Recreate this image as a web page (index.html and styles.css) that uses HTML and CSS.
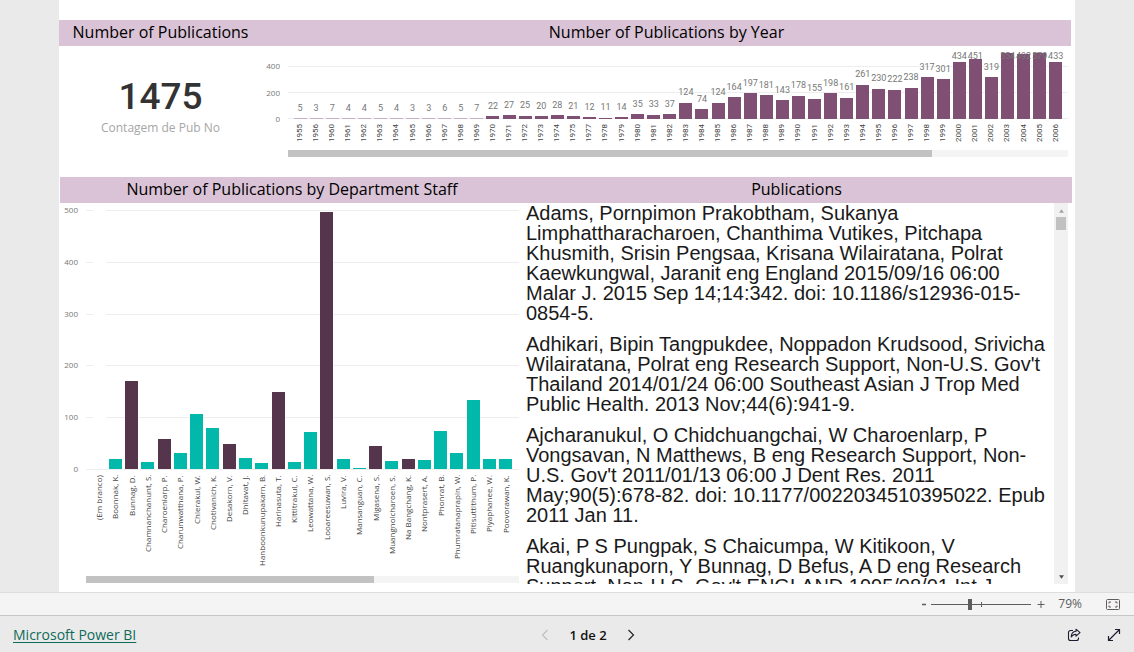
FILE: index.html
```html
<!DOCTYPE html>
<html lang="pt">
<head>
<meta charset="utf-8">
<title>Microsoft Power BI</title>
<link rel="stylesheet" href="styles.css">
</head>
<body>
<main class="report">
  <header class="band band-top">
    <h2 class="band-title band-card">Number of Publications</h2>
    <h2 class="band-title band-year">Number of Publications by Year</h2>
  </header>
  <section class="row-top">
    <div class="card">
      <div class="card-value">1475</div>
      <div class="card-label">Contagem de Pub No</div>
    </div>
    <div class="chart year-chart">
      <div class="axis year-axis"><span>400</span><span>200</span><span>0</span></div>
      <div class="chart-body">
        <div class="plot year-plot">
          <div class="grid"><i></i><i></i><i></i></div>
          <div class="columns" id="year-bars"></div>
        </div>
        <div class="labels year-labels" id="year-labels"></div>
        <div class="hscroll"><div class="hthumb year-thumb"></div></div>
      </div>
    </div>
  </section>
  <header class="band band-bottom">
    <h2 class="band-title band-staff">Number of Publications by Department Staff</h2>
    <h2 class="band-title band-pubs">Publications</h2>
  </header>
  <section class="row-bottom">
    <div class="chart staff-chart">
      <div class="axis staff-axis"><span>500</span><span>400</span><span>300</span><span>200</span><span>100</span><span>0</span></div>
      <div class="chart-body">
        <div class="plot staff-plot">
          <div class="grid"><i></i><i></i><i></i><i></i><i></i><i></i></div>
          <div class="columns" id="staff-bars"></div>
        </div>
        <div class="labels staff-labels" id="staff-labels"></div>
        <div class="hscroll"><div class="hthumb staff-thumb"></div></div>
      </div>
    </div>
    <div class="pubs">
      <div class="pubs-text">
        <p>Adams, Pornpimon Prakobtham, Sukanya Limphattharacharoen, Chanthima Vutikes, Pitchapa Khusmith, Srisin Pengsaa, Krisana Wilairatana, Polrat Kaewkungwal, Jaranit eng England 2015/09/16 06:00 Malar J. 2015 Sep 14;14:342. doi: 10.1186/s12936-015-0854-5.</p>
        <p>Adhikari, Bipin Tangpukdee, Noppadon Krudsood, Srivicha Wilairatana, Polrat eng Research Support, Non-U.S. Gov't Thailand 2014/01/24 06:00 Southeast Asian J Trop Med Public Health. 2013 Nov;44(6):941-9.</p>
        <p>Ajcharanukul, O Chidchuangchai, W Charoenlarp, P Vongsavan, N Matthews, B eng Research Support, Non-U.S. Gov't 2011/01/13 06:00 J Dent Res. 2011 May;90(5):678-82. doi: 10.1177/0022034510395022. Epub 2011 Jan 11.</p>
        <p>Akai, P S Pungpak, S Chaicumpa, W Kitikoon, V Ruangkunaporn, Y Bunnag, D Befus, A D eng Research Support, Non-U.S. Gov't ENGLAND 1995/08/01 Int J</p>
      </div>
      <div class="vscroll">
        <svg class="varrow up" viewBox="0 0 6 4"><path d="M3 0 6 4H0z"/></svg>
        <div class="vthumb"></div>
        <svg class="varrow down" viewBox="0 0 6 4"><path d="M0 0H6L3 4z"/></svg>
      </div>
    </div>
  </section>
</main>
<div class="zoombar">
  <button class="zoom-step" type="button" aria-label="Diminuir zoom"><svg width="6" height="12" viewBox="0 0 6 12"><path d="M1 6.500H5" stroke="#605e5c" stroke-width="1.500"/></svg></button>
  <div class="zoom-track">
    <input class="zoom-range" type="range" min="0" max="100" value="38" aria-label="Zoom">
    <span class="zoom-tick"></span>
  </div>
  <button class="zoom-step plus" type="button" aria-label="Aumentar zoom"><svg width="8" height="12" viewBox="0 0 8 12"><path d="M0.500 6.500H7.500M4 3V10" stroke="#605e5c"/></svg></button>
  <span class="zoom-value">79%</span>
  <button class="fit" type="button" aria-label="Ajustar à página"><svg width="14" height="11" viewBox="0 0 14 11" fill="none" stroke="#605e5c"><rect x=".5" y=".5" width="13" height="10" rx="1"/><path d="M5 3H3V4.500M9 3H11V4.500M5 8H3V6.500M9 8H11V6.500"/></svg></button>
</div>
<footer class="footer">
  <a class="brand" href="#">Microsoft Power BI</a>
  <nav class="pager">
    <button type="button" aria-label="Anterior" class="prev" disabled><svg width="8" height="12" viewBox="0 0 8 12" fill="none" stroke="currentColor" stroke-width="1.200"><path d="M6.500 1 1.500 6 6.500 11"/></svg></button>
    <span class="page-no">1 de 2</span>
    <button type="button" aria-label="Próxima"><svg width="8" height="12" viewBox="0 0 8 12" fill="none" stroke="currentColor" stroke-width="1.200"><path d="M1.500 1 6.500 6 1.500 11"/></svg></button>
  </nav>
  <div class="actions">
    <button type="button" aria-label="Compartilhar"><svg width="14" height="14" viewBox="0 0 14 14" fill="none" stroke="#201c30" stroke-width="1.100" stroke-linejoin="round"><path d="M6 2.500H3.500A2 2 0 0 0 1.500 4.500V10.500A2 2 0 0 0 3.500 12.500H9.500A2 2 0 0 0 11.500 10.500V9.500"/><path d="M9 1.200 13 4.700 9 8.200V6.200C6.500 6.200 5.300 7 4.200 9 4.300 5.500 6 3.400 9 3.200z"/></svg></button>
    <button type="button" aria-label="Tela inteira"><svg width="14" height="14" viewBox="0 0 14 14" fill="none" stroke="#201c30" stroke-width="1.200"><path d="M1.500 12.500 12.500 1.500M8 1.500H12.500V6M1.500 8V12.500H6"/></svg></button>
  </div>
</footer>
<script src="charts.js"></script>
</body>
</html>
```
FILE: styles.css
```css
* { box-sizing: border-box; }
body {
  margin: 0;
  min-height: 100vh;
  display: flex;
  flex-direction: column;
  background: #eaeaea;
  font-family: "Open Sans", "Noto Sans", sans-serif;
  color: #252423;
}
button { border: 0; padding: 0; background: none; display: flex; align-items: center; color: inherit; }
.report {
  flex: 1;
  margin: 0 59px;
  padding: 20px 3px 8px 0;
  background: #fff;
  display: flex;
  flex-direction: column;
}
.band { display: grid; height: 26px; align-items: start; background: #dac3d6; }
.band-top { grid-template-columns: 203px 1fr; margin-right: 1px; }
.band-bottom { grid-template-columns: 464px 1fr; margin-left: 1px; }
.band-title { margin: 0; font-size: 16px; line-height: 24px; font-weight: 400; color: #000; text-align: center; white-space: nowrap; }
.band-pubs { padding-right: 3px; }

.row-top { display: grid; grid-template-columns: 203px 1fr; height: 131px; padding-right: 4px; }
.card { text-align: center; padding-top: 30px; }
.card-value { font-family: Roboto, sans-serif; font-size: 37px; line-height: 42px; font-weight: 500; color: #333; }
.card-label { font-size: 12px; line-height: 20px; color: #a6a6a6; }

.chart { display: flex; min-width: 0; }
.chart-body { flex: 1; min-width: 0; display: flex; flex-direction: column; }
.axis { display: flex; flex-direction: column; justify-content: space-between; text-align: right; font-size: 8px; line-height: 12px; color: #777; }
.year-axis { width: 18px; height: 65px; margin: 14px 8px 0 0; }
.plot { position: relative; }
.grid { position: absolute; inset: 0; display: flex; flex-direction: column; justify-content: space-between; }
.grid i { height: 1px; background: #ededed; }
.columns { position: relative; height: 100%; display: flex; align-items: flex-end; }
.col { flex: 1; min-width: 0; height: 100%; display: flex; flex-direction: column; justify-content: flex-end; align-items: center; position: relative; }
.bar { width: 13px; flex: none; }
.labels { display: flex; }
.labels span { flex: 1; min-width: 0; display: flex; align-items: center; justify-content: flex-end; writing-mode: vertical-rl; transform: rotate(180deg); white-space: nowrap; font-size: 8px; line-height: 16px; color: #444; }
.hscroll { height: 7px; background: #f4f4f4; }
.hthumb { height: 7px; background: #c2c2c2; }

.year-plot { height: 66px; margin-top: 7px; }
.year-plot .grid { top: 13px; }
.year-plot .columns { padding: 0 4px; }
.year-plot .bar { background: #7f5073; }
.year-plot .bar.small { background: #c6b0c2; }
.year-plot .val { position: absolute; font-family: Roboto, sans-serif; font-size: 9px; line-height: 10px; color: #777; }
.year-labels { height: 31px; padding: 5px 4px 0; font-family: Roboto, sans-serif; }
.year-labels span { height: 18px; }
.year-thumb { width: 82.6%; }

.row-bottom { flex: 1; display: grid; grid-template-columns: 460px 1fr; column-gap: 7px; }
.staff-axis { width: 19px; height: 271px; margin: 1px 8px 0 0; }
.staff-plot { height: 260px; margin-top: 7px; }
.staff-plot .columns { padding: 0 5px 1px; }
.staff-plot .bar { background: #01b8aa; }
.staff-plot .bar.dark { background: #55354c; }
.staff-plot .bar.blank { background: #fff; }
.staff-labels { flex: 1; padding: 5px 5px 0; }
.staff-thumb { width: 66.5%; }
.staff-chart .hscroll { margin-bottom: 1px; }

.pubs { display: grid; grid-template-columns: 1fr 14px; height: 381px; margin: 0 4px 0 0; }
.pubs-text { overflow: hidden; font-family: "Liberation Sans", Arial, sans-serif; font-size: 20px; line-height: 20px; color: #1a1a1a; }
.pubs-text p { margin: 0 0 11px; }
.vscroll { background: #f1f1f1; display: flex; flex-direction: column; align-items: center; padding: 6px 0 5px; }
.varrow { width: 5px; height: 4px; fill: #505050; }
.varrow.up { fill: #a3a3a3; }
.varrow.down { margin-top: auto; }
.vthumb { width: 10px; height: 13px; margin-top: 4px; background: #c1c1c1; }

.zoombar { height: 24px; background: #f4f4f4; border-top: 1px solid #dedede; border-bottom: 1px solid #c6c6c6; display: flex; align-items: center; justify-content: flex-end; padding-right: 14px; color: #605e5c; }
.zoom-track { position: relative; width: 100px; height: 12px; margin: 0 6px 0 4px; display: flex; align-items: center; }
.zoom-range { appearance: none; width: 100%; height: 12px; margin: 0; background: linear-gradient(#605e5c, #605e5c) center / 100% 1px no-repeat; }
.zoom-range::-webkit-slider-thumb { appearance: none; width: 4px; height: 11px; background: #605e5c; }
.zoom-tick { position: absolute; left: 50%; top: 4px; width: 1px; height: 5px; background: #605e5c; }
.zoom-value { margin: 0 24px 0 13px; font-size: 12px; line-height: 20px; }

.footer { height: 36px; display: grid; grid-template-columns: 1fr auto 1fr; align-items: center; padding: 2px 13px 0; }
.brand { color: #0f6a5a; justify-self: start; font-size: 14px; line-height: 20px; text-underline-offset: 2px; }
.pager { display: flex; align-items: center; gap: 20px; padding-left: 42px; color: #252423; }
.prev { color: #c0c0c0; }
.page-no { font-weight: 600; line-height: 20px; color: #111; font-size: 13px; }
.actions { display: flex; gap: 26px; justify-self: end; }
```
FILE: charts.js
```js
const years = [
  [1955, 5], [1956, 3], [1960, 7], [1961, 4], [1962, 4], [1963, 5], [1964, 4], [1965, 3],
  [1966, 3], [1967, 6], [1968, 5], [1969, 7], [1970, 22], [1971, 27], [1972, 25], [1973, 20],
  [1974, 28], [1975, 21], [1977, 12], [1978, 11], [1979, 14], [1980, 35], [1981, 33], [1982, 37],
  [1983, 124], [1984, 74], [1985, 124], [1986, 164], [1987, 197], [1988, 181], [1989, 143],
  [1990, 178], [1991, 155], [1992, 198], [1993, 161], [1994, 261], [1995, 230], [1996, 222],
  [1997, 238], [1998, 317], [1999, 301], [2000, 434], [2001, 451], [2002, 319], [2003, 554],
  [2004, 492], [2005, 579], [2006, 433]
];
const staff = [
  ["(Em branco)", 500, "blank"], ["Boonnak, K.", 19], ["Bunnag, D.", 170, "dark"],
  ["Chamnanchanunt, S.", 14], ["Charoenlarp, P.", 57, "dark"], ["Charunwatthana, P.", 31],
  ["Chierakul, W.", 107], ["Chotivanich, K.", 79], ["Desakorn, V.", 49, "dark"],
  ["Dhitavat, J.", 22], ["Hanboonkunupakarn, B.", 11], ["Harinasuta, T.", 148, "dark"],
  ["Kittitrakul, C.", 14], ["Leowattana, W.", 71], ["Looareesuwan, S.", 497, "dark"],
  ["Luvira, V.", 19], ["Mansanguan, C.", 2], ["Migasena, S.", 45, "dark"],
  ["Muangnoicharoen, S.", 15], ["Na Bangchang, K.", 19, "dark"], ["Nontprasert, A.", 18],
  ["Phonrat, B.", 73], ["Phumratanaprapin, W.", 31], ["Pitisuttithum, P.", 133],
  ["Piyaphanee, W.", 19], ["Poovorawan, K.", 20]
];

function add(parent, tag, cls, text) {
  const el = document.createElement(tag);
  if (cls) el.className = cls;
  if (text !== undefined) el.textContent = text;
  parent.append(el);
  return el;
}

const byId = id => document.getElementById(id);

for (const [year, n] of years) {
  const col = add(byId("year-bars"), "div", "col");
  const pct = Math.min(n, 500) / 5;
  add(col, "span", "val", n).style.bottom = Math.min(pct + 8, 88) + "%";
  add(col, "div", n < 10 ? "bar small" : "bar").style.height = Math.max(pct, 2) + "%";
  add(byId("year-labels"), "span", "", year);
}

for (const [name, n, tone] of staff) {
  const col = add(byId("staff-bars"), "div", "col");
  add(col, "div", "bar " + (tone || "")).style.height = n / 5 + "%";
  add(byId("staff-labels"), "span", "", name);
}
```
